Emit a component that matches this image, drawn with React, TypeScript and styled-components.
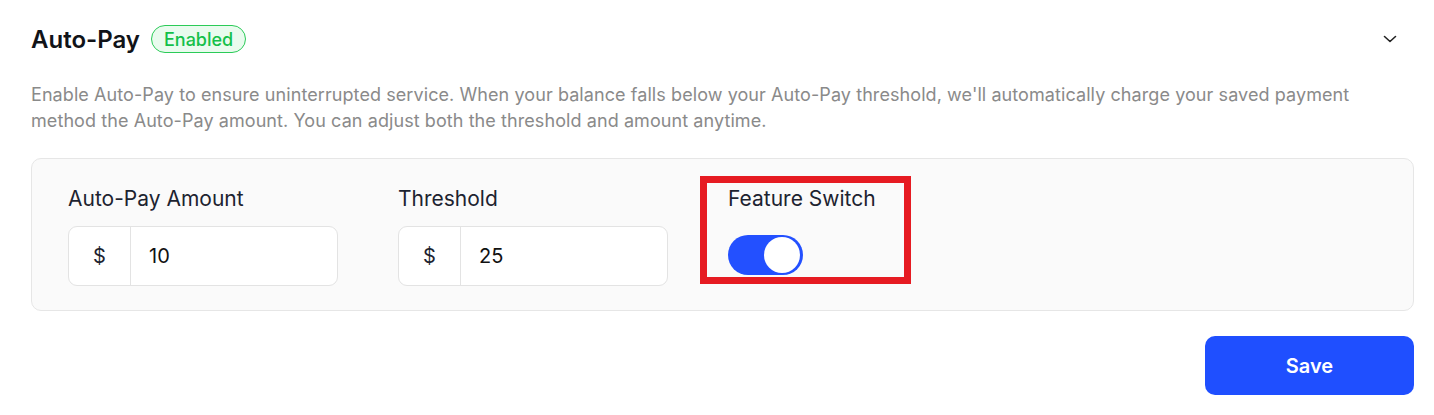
import React, { useState } from 'react'
import styled, { createGlobalStyle } from 'styled-components'

const GlobalStyle = createGlobalStyle`
  body {
    margin: 0;
    background: #ffffff;
    font-family: Inter, "Noto Sans", sans-serif;
  }
`

const Page = styled.section`
  padding: 20px 20px 20px 31px;
`

const Header = styled.header`
  display: flex;
  align-items: center;
  height: 38px;
  padding-right: 16px;
`

const Title = styled.h2`
  margin: 0;
  font-size: 24px;
  font-weight: 600;
  color: #111318;
`

const Badge = styled.span`
  margin-left: 11px;
  height: 28px;
  box-sizing: border-box;
  padding: 0 12px;
  display: inline-flex;
  align-items: center;
  border: 1px solid #2bcb58;
  border-radius: 14px;
  background: #e9fbee;
  color: #14c049;
  font-size: 18px;
  font-weight: 500;
`

const Chevron = styled.button`
  margin-left: auto;
  border: 0;
  background: none;
  padding: 0;
  display: flex;
  color: #222;
`

const Description = styled.p`
  margin: 24px 0 24px;
  max-width: 1360px;
  font-size: 18px;
  letter-spacing: 0.08px;
  line-height: 26px;
  color: #8a8a8a;
`

const Card = styled.div`
  display: flex;
  gap: 60px;
  padding: 26px 36px 24px;
  background: #fafafa;
  border: 1px solid #e6e6e6;
  border-radius: 10px;
`

const Field = styled.div`
  position: relative;
  width: 270px;
  display: flex;
  flex-direction: column;
`

const Label = styled.label`
  font-size: 21px;
  line-height: 28px;
  color: #1d2330;
  margin-bottom: 13px;
`

const InputGroup = styled.div`
  display: flex;
  height: 60px;
  box-sizing: border-box;
  border: 1px solid #e3e3e3;
  border-radius: 9px;
  background: #fff;
  overflow: hidden;
`

const Prefix = styled.span`
  width: 61px;
  display: flex;
  align-items: center;
  justify-content: center;
  border-right: 1px solid #e3e3e3;
  font-size: 20px;
  color: #1d2330;
`

const Input = styled.input`
  flex: 1;
  min-width: 0;
  border: 0;
  outline: none;
  padding: 0 18px;
  font-family: inherit;
  font-size: 20px;
  color: #111;
  background: transparent;
`

const SwitchTrack = styled.button<{ $on: boolean }>`
  margin-top: 9px;
  width: 75px;
  height: 40px;
  border-radius: 20px;
  border: 0;
  padding: 0 3px;
  display: flex;
  align-items: center;
  justify-content: ${p => (p.$on ? 'flex-end' : 'flex-start')};
  background: ${p => (p.$on ? '#2350ff' : '#d4d4d8')};
  cursor: pointer;
`

const Thumb = styled.span`
  width: 36px;
  height: 36px;
  border-radius: 50%;
  background: #fff;
`

const Highlight = styled.div`
  position: absolute;
  left: -28px;
  top: -9px;
  width: 211px;
  height: 108px;
  box-sizing: border-box;
  border: 7px solid #e61b22;
  pointer-events: none;
`

const Footer = styled.div`
  display: flex;
  justify-content: flex-end;
  margin-top: 25px;
`

const SaveButton = styled.button`
  width: 209px;
  height: 59px;
  border: 0;
  border-radius: 10px;
  background: #1f4fff;
  color: #fff;
  font-family: inherit;
  font-size: 20px;
  font-weight: 600;
`

const App = () => {
  const [amount, setAmount] = useState('10')
  const [threshold, setThreshold] = useState('25')
  const [enabled, setEnabled] = useState(true)

  return (
    <>
      <GlobalStyle />
      <Page>
        <Header>
          <Title>Auto-Pay</Title>
          <Badge>Enabled</Badge>
          <Chevron aria-label='Collapse'>
            <svg width='16' height='16' viewBox='0 0 16 16' fill='none'>
              <path d='M2.5 5.5 8 10.5l5.5-5' stroke='currentColor' strokeWidth='1.6' strokeLinecap='round' strokeLinejoin='round' />
            </svg>
          </Chevron>
        </Header>
        <Description>
          Enable Auto-Pay to ensure uninterrupted service. When your balance falls below your Auto-Pay threshold, we'll automatically charge your saved payment method the Auto-Pay amount. You can adjust both the threshold and amount anytime.
        </Description>
        <Card>
          <Field>
            <Label>Auto-Pay Amount</Label>
            <InputGroup>
              <Prefix>$</Prefix>
              <Input value={amount} onChange={e => setAmount(e.target.value)} />
            </InputGroup>
          </Field>
          <Field>
            <Label>Threshold</Label>
            <InputGroup>
              <Prefix>$</Prefix>
              <Input value={threshold} onChange={e => setThreshold(e.target.value)} />
            </InputGroup>
          </Field>
          <Field>
            <Label>Feature Switch</Label>
            <SwitchTrack $on={enabled} onClick={() => setEnabled(!enabled)} aria-label='Feature Switch'>
              <Thumb />
            </SwitchTrack>
            <Highlight />
          </Field>
        </Card>
        <Footer>
          <SaveButton>Save</SaveButton>
        </Footer>
      </Page>
    </>
  )
}

export default App
